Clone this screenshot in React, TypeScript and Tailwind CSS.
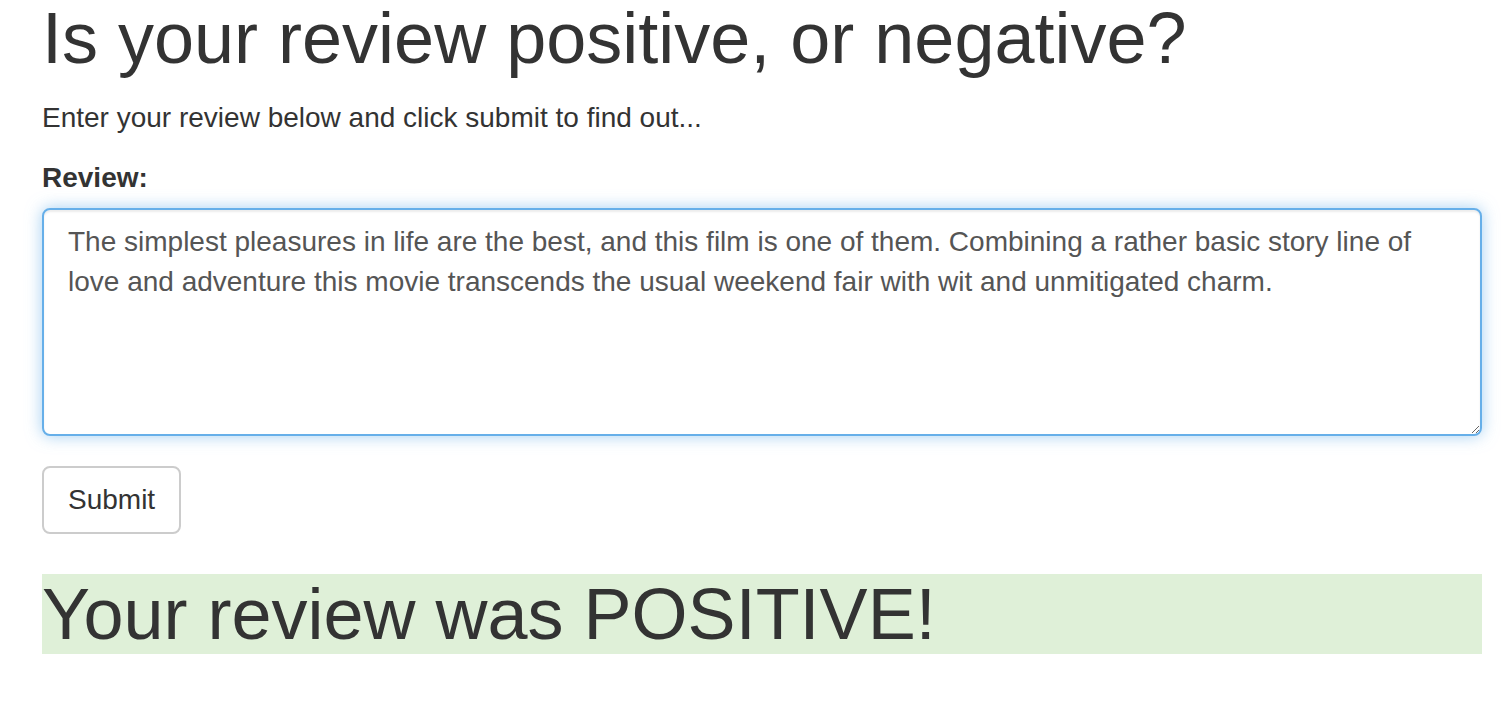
const review =
  "The simplest pleasures in life are the best, and this film is one of them. Combining a rather basic story line of love and adventure this movie transcends the usual weekend fair with wit and unmitigated charm.";

const App = () => {
  return (
    <div className="min-h-screen bg-white text-[#333] font-['Liberation_Sans',Arial,sans-serif]">
      <div className="pl-[42px] w-[1482px]">
        <h1 className="mt-[-1px] mb-[20px] text-[72px] leading-[79px] font-normal">
          Is your review positive, or negative?
        </h1>
        <p className="mb-[20px] text-[28px] leading-[40px]">
          Enter your review below and click submit to find out...
        </p>
        <form className="flex flex-col">
          <label className="mb-[10px] text-[28px] leading-[40px] font-bold" htmlFor="review">
            Review:
          </label>
          <textarea
            id="review"
            rows={5}
            defaultValue={review}
            className="block w-full h-[228px] px-[24px] py-[12px] text-[28px] leading-[40px] text-[#555] bg-white border-2 border-[#66afe9] rounded-[8px] outline-none shadow-[inset_0_2px_2px_rgba(0,0,0,0.075),0_0_16px_rgba(102,175,233,0.6)] font-['Liberation_Sans',Arial,sans-serif]"
          />
          <div className="mt-[30px]">
            <button
              type="button"
              className="h-[68px] px-[24px] text-[28px] leading-[40px] text-[#333] bg-white border-2 border-[#ccc] rounded-[8px]"
            >
              Submit
            </button>
          </div>
        </form>
        <h1 className="mt-[40px] text-[72px] leading-[80px] font-normal bg-[#dff0d8]">
          Your review was POSITIVE!
        </h1>
      </div>
    </div>
  );
};

export default App;
